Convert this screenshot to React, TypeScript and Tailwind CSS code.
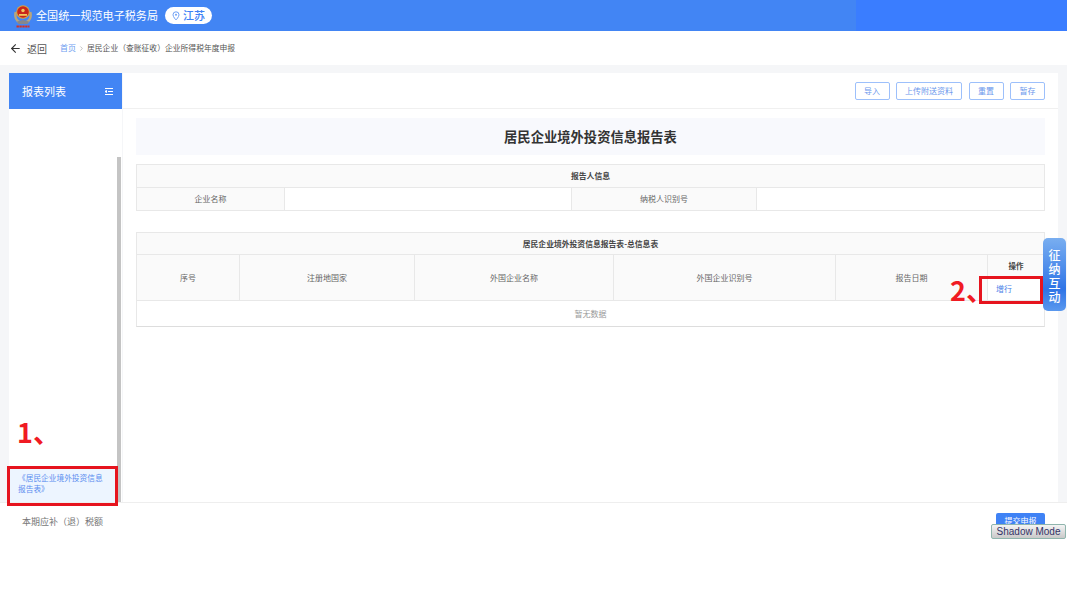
import { ArrowLeft, ChevronRight } from "lucide-react";

const font = "font-['Noto_Sans_CJK_SC','Liberation_Sans',sans-serif]";

const infoCols = "grid grid-cols-[148px_287px_185px_1fr]";
const listCols = "grid grid-cols-[103px_175px_199px_222px_152px_1fr]";

function Emblem() {
  return (
    <svg width="18" height="24" viewBox="0 0 18 24" className="shrink-0">
      <path d="M1.800 8c-1.300 5 .7 9 4.200 10.500h6C15.500 17 17.500 13 16.200 8" fill="none" stroke="#b9a57c" strokeWidth="2.600" />
      <circle cx="9" cy="8" r="6.800" fill="#d9a441" />
      <circle cx="9" cy="8" r="5.800" fill="#c8261c" />
      <circle cx="9" cy="6.500" r="1.700" fill="#f0c75e" />
      <path d="M5 10h8v1.800H5z" fill="#f0c75e" />
      <path d="M3 17.500l6-1.500 6 1.500-1.500 2.500h-9z" fill="#85878c" />
      <path d="M2.500 22.500h13" stroke="#d8301f" strokeWidth="1.800" strokeDasharray="2.400 .5" />
    </svg>
  );
}

function OutlineBtn({ label, width }: { label: string; width: string }) {
  return (
    <button className={`h-[18px] ${width} rounded-[2px] border border-[#9dc0fb] bg-white text-[8px] leading-none text-[#6b97ec]`}>
      {label}
    </button>
  );
}

function Cell({ children, white, last }: { children?: React.ReactNode; white?: boolean; last?: boolean }) {
  return (
    <div
      className={`flex items-center justify-center text-[8px] text-[#666] ${white ? "bg-white" : "bg-[#fafafa]"} ${last ? "" : "border-r border-[#e8e8e8]"}`}
    >
      {children}
    </div>
  );
}

export default function App() {
  return (
    <div className={`relative h-[609px] w-[1080px] overflow-hidden bg-white ${font}`}>
      <div className="w-[1067px]">
        <header className="flex h-[31px] bg-[#4285f4]">
          <div className="flex flex-1 items-center pl-[14px]">
            <Emblem />
            <span className="ml-[4px] text-[11.100px] text-white">全国统一规范电子税务局</span>
            <span className="ml-[7px] flex h-[17px] w-[47px] items-center justify-center gap-[3px] rounded-full bg-white text-[11px] font-medium text-[#3f82f5]">
              <svg width="8" height="10" viewBox="0 0 8 10">
                <path d="M4 .8a3 3 0 0 1 3 3C7 5.800 4 9 4 9S1 5.800 1 3.800a3 3 0 0 1 3-3z" fill="none" stroke="#6fa0f6" />
                <circle cx="4" cy="3.800" r="1" fill="#6fa0f6" />
              </svg>
              江苏
            </span>
          </div>
          <div className="w-[211px] bg-[#3a7dff]" />
        </header>

        <div className="flex h-[34px] items-center pl-[9px]">
          <ArrowLeft size={13} strokeWidth={2} className="text-[#333]" />
          <span className="ml-[5px] text-[10px] text-[#555]">返回</span>
          <span className="ml-[13px] text-[8px] text-[#6c9cf0]">首页</span>
          <ChevronRight size={7} className="mx-[2px] text-[#999]" />
          <span className="text-[7.800px] text-[#555]">居民企业（查账征收）企业所得税年度申报</span>
        </div>

        <div className="flex h-[437px] gap-px bg-[#f5f6f8] pl-[9px] pr-[9px] pt-[8px]">
          <aside className="relative flex w-[113px] flex-col bg-white">
            <div className="flex h-[36px] items-center justify-between bg-[#4285f4] pl-[13px] pr-[9px]">
              <span className="text-[11px] text-white">报表列表</span>
              <svg width="8" height="7" viewBox="0 0 8 7" stroke="#fff" strokeWidth="1">
                <path d="M0 .5h8M3 3.500h5M0 6.500h8M0 3.500l1.500-1v2z" fill="#fff" />
              </svg>
            </div>
            <div className="flex-1" />
            <div className="h-[36px] w-[108px] border-l border-[#6c9cf0] bg-[#edf5ff] pl-[8px] pr-[10px] pt-[6px] text-[7.700px] leading-[11px] text-[#5b8def]">
              《居民企业境外投资信息报告表》
            </div>
            <div className="absolute bottom-0 right-px top-[84px] w-[4px] bg-[#c4c4c4]" />
          </aside>

          <main className="flex-1 bg-white">
            <div className="flex h-[36px] items-center justify-end gap-[6.500px] border-b border-[#f0f0f0] pr-[13px]">
              <OutlineBtn label="导入" width="w-[35px]" />
              <OutlineBtn label="上传附送资料" width="w-[66px]" />
              <OutlineBtn label="重置" width="w-[35px]" />
              <OutlineBtn label="暂存" width="w-[35px]" />
            </div>

            <div className="ml-[13px] mr-[13px] mt-[9px]">
              <div className="flex h-[37px] items-center justify-center bg-[#f8f9fd] text-[13.300px] font-bold text-[#333]">
                居民企业境外投资信息报告表
              </div>

              <div className="mt-[9px] border border-[#e8e8e8]">
                <div className="flex h-[23px] items-center justify-center border-b border-[#e8e8e8] bg-[#fafafa] text-[7.800px] font-bold text-[#444]">
                  报告人信息
                </div>
                <div className={`${infoCols} h-[22px]`}>
                  <Cell>企业名称</Cell>
                  <Cell white />
                  <Cell>纳税人识别号</Cell>
                  <Cell white last />
                </div>
              </div>

              <div className="mt-[21px] border border-[#e8e8e8] border-b-[#ddd]">
                <div className="flex h-[22px] items-center justify-center border-b border-[#e8e8e8] bg-[#fafafa] text-[7.800px] font-bold text-[#444]">
                  居民企业境外投资信息报告表-总信息表
                </div>
                <div className={`${listCols} h-[46px] border-b border-[#e8e8e8]`}>
                  <Cell>序号</Cell>
                  <Cell>注册地国家</Cell>
                  <Cell>外国企业名称</Cell>
                  <Cell>外国企业识别号</Cell>
                  <Cell>报告日期</Cell>
                  <div className="flex flex-col">
                    <div className="flex h-[22px] items-center justify-center bg-[#fafafa] text-[7.500px] font-bold text-[#444]">
                      操作
                    </div>
                    <div className="flex flex-1 items-center bg-white pl-[8px] text-[8px] text-[#4d7fe8]">增行</div>
                  </div>
                </div>
                <div className="flex h-[25px] items-center justify-center text-[8px] text-[#999]">暂无数据</div>
              </div>
            </div>
          </main>
        </div>

        <footer className="flex h-[107px] items-start justify-between border-t border-[#eee] pl-[22px] pr-[22px]">
          <span className="mt-[12px] text-[9px] text-[#777]">本期应补（退）税额</span>
          <button className="mt-[10px] flex h-[22px] w-[49px] items-start justify-center rounded-[2px] bg-[#3f82f5] pt-[2px] text-[8px] text-white">提交申报</button>
        </footer>
      </div>

      {/* annotations and floating widgets on top of the page */}
      <div className="absolute left-[1043px] top-[238px] flex h-[73px] w-[23px] items-center justify-center rounded-[5px] bg-gradient-to-b from-[#79aef0] via-[#2f74e6] via-70% to-[#5a98ee] pt-[2px] text-white">
        <span className="block w-[12px] break-all text-center text-[12px] font-medium leading-[14px]">征纳互动</span>
      </div>
      <div className="absolute left-[7px] top-[466px] h-[40px] w-[111px] border-[3px] border-[#e6141e]" />
      <div className="absolute left-[979px] top-[276px] h-[28px] w-[64px] border-[3px] border-[#e6141e]" />
      <span className="absolute left-[17px] top-[412px] text-[27px] font-bold leading-[40px] text-[#f01b23]">1、</span>
      <span className="absolute left-[950px] top-[270px] text-[27px] font-bold leading-[40px] text-[#f01b23]">2、</span>
      <div className="absolute left-[991px] top-[524px] flex h-[15px] w-[75px] items-center justify-center rounded-[2px] border border-[#8fb5ad] bg-gradient-to-b from-[#f4f4f4] to-[#c9c9c9] font-['Liberation_Sans',sans-serif] text-[10px] text-[#333366]">
        Shadow Mode
      </div>
    </div>
  );
}
